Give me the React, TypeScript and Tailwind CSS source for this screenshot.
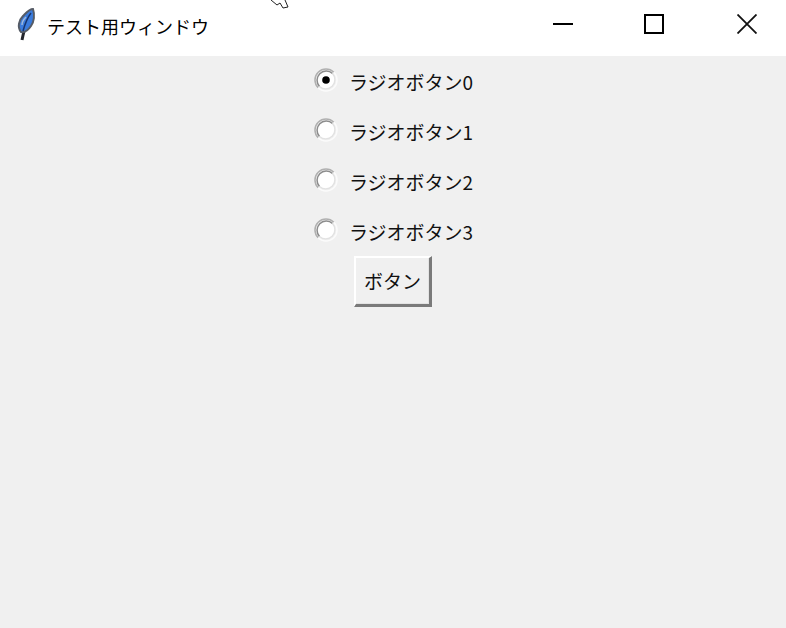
const options = ["ラジオボタン0", "ラジオボタン1", "ラジオボタン2", "ラジオボタン3"];

const Feather = () => (
  <svg width="20" height="34" viewBox="0 0 20 34">
    <path d="M6 33 L8 24" stroke="#23252b" strokeWidth="3" fill="none" />
    <path d="M5 25 C1 20 3 13 7 9 C10 6 13 2 17 2 C19 8 18 15 15 19 C13 22 10 26 5 25 Z" fill="#3a7bdc" stroke="#565c66" strokeWidth="2" />
    <path d="M7 24 C9 17 11 11 15 6" stroke="#17356f" strokeWidth="1.5" fill="none" />
    <path d="M6 18 C6 15 8 12 10 10" stroke="#9db8dc" strokeWidth="1.5" fill="none" />
  </svg>
);

const Radio = ({ checked }: { checked: boolean }) => (
  <svg width="24" height="24" viewBox="0 0 24 24" className="ml-px shrink-0 -mt-[3px]">
    <circle cx="12" cy="12" r="9.5" fill="#ffffff" />
    <path d="M4.2 19.8 A11 11 0 0 1 19.8 4.2" fill="none" stroke="#b0b0b0" strokeWidth="1.5" />
    <path d="M5.5 18.5 A9.2 9.2 0 0 1 18.5 5.5" fill="none" stroke="#8c8c8c" strokeWidth="1.5" />
    <path d="M19.8 4.2 A11 11 0 0 1 4.2 19.8" fill="none" stroke="#fbfbfb" strokeWidth="1.5" />
    <path d="M18.5 5.5 A9.2 9.2 0 0 1 5.5 18.5" fill="none" stroke="#e2e2e2" strokeWidth="1.5" />
    {checked && <circle cx="12" cy="12" r="3.8" fill="#000000" />}
  </svg>
);

export default function App() {
  return (
    <div className="flex flex-col h-[628px] w-[786px] bg-[#f0f0f0] font-['Noto_Sans_CJK_JP',sans-serif] text-[#111] overflow-hidden">
      <div className="relative flex h-14 items-center bg-white shrink-0 pb-2">
        <div className="ml-4 w-[31px]">
          <Feather />
        </div>
        <span className="mt-[3px] text-[18px] leading-none text-black">テスト用ウィンドウ</span>
        <div className="ml-auto flex items-center pr-[29px]">
          <div className="mr-[71px] h-[2px] w-5 bg-black" />
          <div className="mr-[73px] h-5 w-5 border-2 border-black" />
          <svg width="20" height="20" viewBox="0 0 20 20">
            <path d="M0.5 0.5 L19.5 19.5 M19.5 0.5 L0.5 19.5" stroke="#111" strokeWidth="1.8" />
          </svg>
        </div>
        {/* mouse pointer clipped by the top of the screen */}
        <svg width="22" height="10" viewBox="0 0 22 10" className="absolute left-[270px] top-0">
          <path d="M1 0 L7 5 L10 3 L13 8 L18 7 L15 0" fill="#fff" stroke="#222" strokeWidth="1" />
        </svg>
      </div>
      <div className="flex flex-col items-center">
        <div className="flex flex-col">
          {options.map((label, i) => (
            <div key={label} className="flex h-[50px] w-[160px] items-center gap-[11px]">
              <Radio checked={i === 0} />
              <span className="whitespace-nowrap text-[19px] leading-none">{label}</span>
            </div>
          ))}
        </div>
        <button className="h-[51px] w-[78px] border-2 border-white border-r-[3px] border-b-[3px] border-r-[#7a7a7a] border-b-[#7a7a7a] bg-[#f0f0f0] text-[19px] text-[#111] shadow-[inset_-1px_-1px_0_#e3e3e3]">
          ボタン
        </button>
      </div>
    </div>
  );
}
